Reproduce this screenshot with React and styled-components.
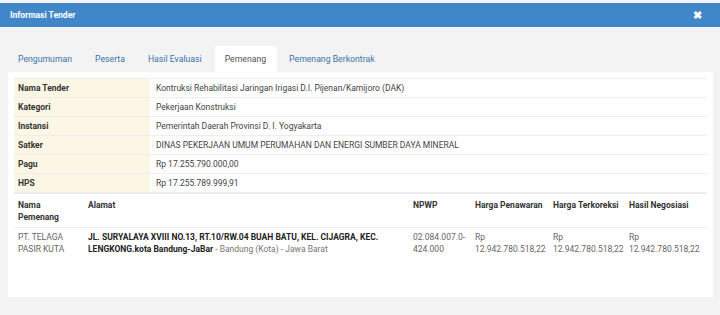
import React from "react";
import styled, { createGlobalStyle } from "styled-components";

const Global = createGlobalStyle`
  body {
    margin: 0;
    background: #f3f3f3;
    font-family: Roboto, "Liberation Sans", sans-serif;
    font-size: 8.5px;
    color: #333;
  }
`;

const Modal = styled.div`
  width: 720px;
  height: 315px;
  padding-top: 3px;
  box-sizing: border-box;
  background: #f3f3f3;
  overflow: hidden;
`;

const Header = styled.div`
  height: 24px;
  background: #3f87c9;
  display: flex;
  align-items: center;
  justify-content: space-between;
  padding: 0 18px 0 10px;
  color: #fff;
`;

const Title = styled.div`
  font-weight: 700;
  font-size: 8.5px;
`;

const Close = styled.div`
  font-weight: 700;
  font-size: 11px;
  line-height: 1;
`;

const Body = styled.div`
  padding: 19px 7px 0 8px;
`;

const Tabs = styled.div`
  display: flex;
  height: 26px;
`;

const Tab = styled.div`
  padding: 0 11px 0 10px;
  margin-right: 2px;
  display: flex;
  align-items: center;
  color: ${(p) => (p.$active ? "#555" : "#3d74a8")};
  background: ${(p) => (p.$active ? "#fff" : "transparent")};
  border-radius: 2px 2px 0 0;
  font-size: 8.7px;
`;

const Panel = styled.div`
  background: #fff;
  height: 225px;
  padding: 6px 6px;
  box-sizing: border-box;
`;

const InfoTable = styled.table`
  width: 100%;
  border-collapse: collapse;
`;

const Label = styled.td`
  width: 128px;
  background: #fcf7e4;
  font-weight: 700;
  color: #333;
  padding: 0 4px;
  height: 18px;
  border-top: 1px solid #eee;
`;

const Value = styled.td`
  padding: 0 6px;
  height: 18px;
  color: #444;
  border-top: 1px solid #eee;
`;

const WinTable = styled.table`
  width: 100%;
  table-layout: fixed;
  border-collapse: collapse;
  border-top: 2px solid #eee;
`;

const Th = styled.th`
  text-align: left;
  font-weight: 700;
  color: #333;
  vertical-align: top;
  padding: 5px 4px 4px;
  line-height: 12px;
  border-bottom: 1px solid #eee;
  width: ${(p) => p.$w};
`;

const Td = styled.td`
  vertical-align: top;
  padding: 3px 4px;
  line-height: 12px;
  color: ${(p) => (p.$muted ? "#666" : "#444")};
`;

const Strong = styled.b`
  color: #222;
`;

const Muted = styled.span`
  color: #777;
`;

const info = [
  ["Nama Tender", "Kontruksi Rehabilitasi Jaringan Irigasi D.I. Pijenan/Kamijoro (DAK)"],
  ["Kategori", "Pekerjaan Konstruksi"],
  ["Instansi", "Pemerintah Daerah Provinsi D. I. Yogyakarta"],
  ["Satker", "DINAS PEKERJAAN UMUM PERUMAHAN DAN ENERGI SUMBER DAYA MINERAL"],
  ["Pagu", "Rp 17.255.790.000,00"],
  ["HPS", "Rp 17.255.789.999,91"],
];

const tabs = ["Pengumuman", "Peserta", "Hasil Evaluasi", "Pemenang", "Pemenang Berkontrak"];

export default function App() {
  return (
    <>
      <Global />
      <Modal>
        <Header>
          <Title>Informasi Tender</Title>
          <Close>✖</Close>
        </Header>
        <Body>
          <Tabs>
            {tabs.map((t) => (
              <Tab key={t} $active={t === "Pemenang"}>
                {t}
              </Tab>
            ))}
          </Tabs>
          <Panel>
            <InfoTable>
              <tbody>
                {info.map(([k, v]) => (
                  <tr key={k}>
                    <Label>{k}</Label>
                    <Value>{v}</Value>
                  </tr>
                ))}
              </tbody>
            </InfoTable>
            <WinTable>
              <thead>
                <tr>
                  <Th $w="62px">
                    Nama
                    <br />
                    Pemenang
                  </Th>
                  <Th $w="317px">Alamat</Th>
                  <Th $w="54px">NPWP</Th>
                  <Th $w="70px">Harga Penawaran</Th>
                  <Th $w="68px">Harga Terkoreksi</Th>
                  <Th $w="auto">Hasil Negosiasi</Th>
                </tr>
              </thead>
              <tbody>
                <tr>
                  <Td $muted>
                    PT. TELAGA
                    <br />
                    PASIR KUTA
                  </Td>
                  <Td>
                    <Strong>
                      JL. SURYALAYA XVIII NO.13, RT.10/RW.04 BUAH BATU, KEL. CIJAGRA, KEC.
                      LENGKONG.kota Bandung-JaBar
                    </Strong>{" "}
                    <Muted>- Bandung (Kota) - Jawa Barat</Muted>
                  </Td>
                  <Td $muted>02.084.007.0-424.000</Td>
                  <Td $muted>Rp 12.942.780.518,22</Td>
                  <Td $muted>Rp 12.942.780.518,22</Td>
                  <Td $muted>Rp 12.942.780.518,22</Td>
                </tr>
              </tbody>
            </WinTable>
          </Panel>
        </Body>
      </Modal>
    </>
  );
}
